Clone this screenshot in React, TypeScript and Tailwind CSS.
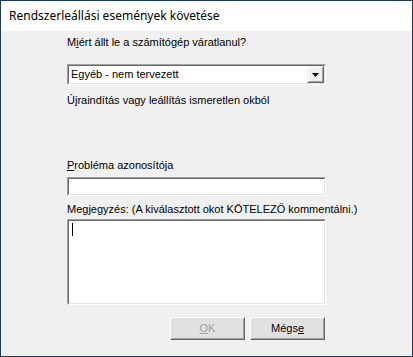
import React, { FC, ReactNode } from "react";

const sunken = "border border-t-[#a0a0a0] border-l-[#a0a0a0] border-b-white border-r-white";
const sunkenInner = "border border-t-[#696969] border-l-[#696969] border-b-[#e3e3e3] border-r-[#e3e3e3] bg-white";

const Sunken: FC<{ className?: string; children?: ReactNode }> = ({ className, children }) => {
    return (
        <div className={`${sunken} ${className}`}>
            <div className={`${sunkenInner} w-full h-full relative`}>{children}</div>
        </div>
    );
}

const Button: FC<{ children: ReactNode; disabled?: boolean }> = ({ children, disabled }) => {
    return (
        <div className="w-[75px] h-[23px] border border-t-white border-l-white border-b-[#696969] border-r-[#696969]">
            <div className="w-full h-full border border-t-[#e3e3e3] border-l-[#e3e3e3] border-b-[#a0a0a0] border-r-[#a0a0a0] bg-[#e1e1e1] flex items-center justify-center">
                <span className={disabled ? "text-[#a0a0a0]" : "text-black"}>{children}</span>
            </div>
        </div>
    );
}

const App: FC = () => {
    return (
        <div className="w-[413px] h-[357px] border border-[#1d3a59] bg-[#f0f0f0] flex flex-col overflow-hidden">
            <div className="h-[30px] bg-white flex items-center pl-[8px] text-[12px] text-black" style={{ fontFamily: '"Noto Sans", sans-serif' }}>
                Rendszerleállási események követése
            </div>
            <div className="flex flex-col pl-[66px] text-[11px] leading-[13px] text-black" style={{ fontFamily: '"Liberation Sans", Arial, sans-serif' }}>
                <div className="mt-[5px]">M<u>i</u>ért állt le a számítógép váratlanul?</div>
                <Sunken className="mt-[15px] w-[259px] h-[21px]">
                    <div className="pl-[2px] leading-[17px]">Egyéb - nem tervezett</div>
                    <div className="absolute right-0 top-0 w-[17px] h-[17px] border border-t-[#f0f0f0] border-l-[#f0f0f0] border-b-[#696969] border-r-[#696969]">
                        <div className="w-full h-full border border-t-white border-l-white border-b-[#a0a0a0] border-r-[#a0a0a0] bg-[#f0f0f0] flex items-center justify-center">
                            <svg width="7" height="4" viewBox="0 0 7 4"><path d="M0 0h7L3.5 4z" fill="#000" /></svg>
                        </div>
                    </div>
                </Sunken>
                <div className="mt-[9px]">Újraindítás vagy leállítás ismeretlen okból</div>
                <div className="mt-[52px]"><u>P</u>robléma azonosítója</div>
                <Sunken className="mt-[5px] w-[259px] h-[19px]" />
                <div className="mt-[7px]">Meg<u>j</u>egyzés: (A kiválasztott okot KÖTELEZŐ kommentálni.)</div>
                <Sunken className="mt-[3px] w-[259px] h-[86px]">
                    <div className="absolute left-[3px] top-[2px] w-[1px] h-[13px] bg-black" />
                </Sunken>
                <div className="mt-[12px] flex gap-[5px] pl-[103px]">
                    <Button disabled><u>O</u>K</Button>
                    <Button>Mégs<u>e</u></Button>
                </div>
            </div>
        </div>
    );
}

export default App;
